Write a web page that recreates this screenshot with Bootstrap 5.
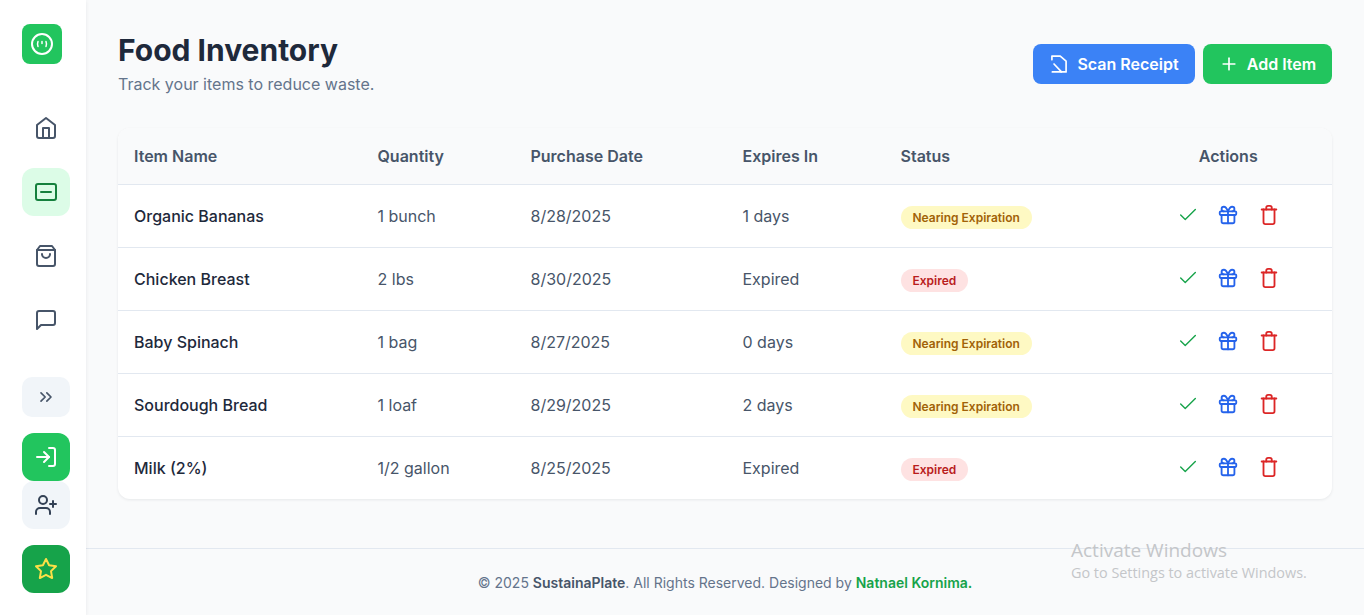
<!DOCTYPE html>
<html lang="en">
<head>
  <meta charset="UTF-8">
  <title>Food Inventory</title>
  <link href="https://cdn.jsdelivr.net/npm/bootstrap@5.3.0/dist/css/bootstrap.min.css" rel="stylesheet">
  <style>
    body { font-family: Inter, "Liberation Sans", sans-serif; background: #f9fafb; height: 100vh; overflow: hidden; color: #1f2937; }
    svg.ico { fill: none; stroke: currentColor; stroke-width: 2; stroke-linecap: round; stroke-linejoin: round; flex: none; }
    svg.ico .thin-line { stroke-width: 1.5; }
    .side-bar { width: 86px; background: #fff; box-shadow: 0 1px 4px rgba(15, 23, 42, .08); padding: 24px 16px 22px 22px; z-index: 2; }
    .logo-box { width: 40px; height: 40px; background: #22c55e; color: #fff; border-radius: 8px; margin-bottom: 40px; }
    .side-link { width: 48px; height: 48px; border-radius: 12px; color: #475569; }
    .side-link.is-active { background: #dcfce7; color: #15803d; }
    .side-toggle { width: 48px; height: 40px; border-radius: 10px; background: #f1f5f9; color: #475569; margin-top: 33px; margin-bottom: 16px; }
    .side-login { background: #22c55e; color: #fff; }
    .side-signup { background: #f1f5f9; color: #334155; }
    .side-star { background: #16a34a; color: #fde047; margin-top: 16px; }
    .page-head { padding: 32px 32px 0; height: 128px; }
    .page-title { font-size: 30px; font-weight: 700; line-height: 36px; color: #1e293b; margin: 0; }
    .page-sub { font-size: 16px; line-height: 24px; color: #64748b; margin: 4px 0 0; }
    .head-actions { margin-top: 12px; }
    .head-btn { height: 40px; border: 0; border-radius: 8px; color: #fff; font-size: 16px; font-weight: 600; padding: 0 16px; white-space: nowrap; }
    .btn-scan { background: #3b82f6; width: 162px; }
    .btn-add { background: #22c55e; width: 129px; }
    .table-box { margin: 0 32px; border-radius: 12px; background: #fff; box-shadow: 0 1px 3px rgba(15, 23, 42, .08); overflow: hidden; }
    .stock-table { margin: 0; table-layout: fixed; width: 100%; font-size: 16px; }
    .stock-table th { height: 56px; padding: 0 16px; background: #f9fafb; color: #475569; font-weight: 600; vertical-align: middle; border-bottom: 1px solid #e2e8f0; }
    .stock-table td { height: 63px; padding: 0 16px; color: #475569; vertical-align: middle; border-bottom: 1px solid #e2e8f0; }
    .stock-table tr:last-child td { border-bottom: 0; }
    .stock-table td.item-name { color: #1e293b; font-weight: 500; }
    .stock-table td.status-cell { padding-top: 2px; }
    .w-name { width: 243.5px; } .w-qty { width: 153px; } .w-date { width: 212px; } .w-exp { width: 158px; } .w-status { width: 240px; }
    .status-pill { display: inline-block; font-size: 12px; font-weight: 600; line-height: 16px; padding: 4px 12px 3px 12px; border-radius: 999px; }
    .pill-near { background: #fef9c3; color: #a16207; }
    .pill-gone { background: #fee2e2; color: #b91c1c; }
    .act-row { gap: 18.5px; margin-bottom: 2px; }
    .act-ok { color: #16a34a; } .act-gift { color: #2563eb; } .act-del { color: #dc2626; }
    .page-foot { border-top: 1px solid #e2e8f0; height: 67px; padding-top: 24px; font-size: 14px; line-height: 20px; color: #64748b; text-align: center; }
    .page-foot b { font-weight: 600; color: #475569; }
    .foot-link { font-weight: 600; color: #16a34a; text-decoration: none; }
    .win-mark { position: absolute; left: 1071px; top: 538px; color: #c4c6c9; font-family: "Open Sans", sans-serif; font-size: 14.4px; line-height: 20px; white-space: nowrap; }
    .win-mark div:first-child { font-size: 19px; line-height: 25px; }
  </style>
</head>
<body>
  <div class="d-flex h-100">
    <!-- Sidebar -->
    <aside class="side-bar d-flex flex-column flex-shrink-0">
      <div class="logo-box d-flex align-items-center justify-content-center">
        <svg class="ico" width="24" height="24" viewBox="0 0 24 24"><circle cx="12" cy="12" r="10"/><path class="thin-line" d="M8 9.5q-1 2.5 0 5M16 9.5q1 2.5 0 5M12 9.5v2"/></svg>
      </div>
      <nav class="d-flex flex-column gap-3">
        <a class="side-link d-flex align-items-center justify-content-center">
          <svg class="ico" width="24" height="24" viewBox="0 0 24 24"><path d="m3 9 9-7 9 7v11a2 2 0 0 1-2 2H5a2 2 0 0 1-2-2z"/><path d="M9 22V12h6v10"/></svg>
        </a>
        <a class="side-link is-active d-flex align-items-center justify-content-center">
          <svg class="ico" width="24" height="24" viewBox="0 0 24 24"><rect x="2" y="4" width="20" height="16" rx="2"/><path d="M7 12h10"/></svg>
        </a>
        <a class="side-link d-flex align-items-center justify-content-center">
          <svg class="ico" width="24" height="24" viewBox="0 0 24 24"><path d="M6 2 3 6v14a2 2 0 0 0 2 2h14a2 2 0 0 0 2-2V6l-3-4Z"/><path d="M3 6h18"/><path d="M16 10a4 4 0 0 1-8 0"/></svg>
        </a>
        <a class="side-link d-flex align-items-center justify-content-center">
          <svg class="ico" width="24" height="24" viewBox="0 0 24 24"><path d="M21 15a2 2 0 0 1-2 2H7l-4 4V5a2 2 0 0 1 2-2h14a2 2 0 0 1 2 2z"/></svg>
        </a>
      </nav>
      <div class="side-toggle d-flex align-items-center justify-content-center">
        <svg class="ico" width="20" height="20" viewBox="0 0 24 24"><path d="m6 17 5-5-5-5"/><path d="m13 17 5-5-5-5"/></svg>
      </div>
      <a class="side-link side-login d-flex align-items-center justify-content-center">
        <svg class="ico" width="24" height="24" viewBox="0 0 24 24"><path d="M15 3h4a2 2 0 0 1 2 2v14a2 2 0 0 1-2 2h-4"/><path d="m10 17 5-5-5-5"/><path d="M15 12H3"/></svg>
      </a>
      <a class="side-link side-signup d-flex align-items-center justify-content-center">
        <svg class="ico" width="24" height="24" viewBox="0 0 24 24"><path d="M16 21v-2a4 4 0 0 0-4-4H6a4 4 0 0 0-4 4v2"/><circle cx="9" cy="7" r="4"/><path d="M19 8v6"/><path d="M22 11h-6"/></svg>
      </a>
      <a class="side-link side-star d-flex align-items-center justify-content-center">
        <svg class="ico" width="24" height="24" viewBox="0 0 24 24"><path d="M12 2l3.09 6.26L22 9.27l-5 4.87 1.18 6.88L12 17.77l-6.18 3.25L7 14.14 2 9.27l6.91-1.01z"/></svg>
      </a>
    </aside>

    <!-- Main -->
    <main class="flex-grow-1 d-flex flex-column">
      <header class="page-head d-flex justify-content-between align-items-start">
        <div>
          <h1 class="page-title">Food Inventory</h1>
          <p class="page-sub">Track your items to reduce waste.</p>
        </div>
        <div class="d-flex gap-2 head-actions">
          <button class="head-btn btn-scan d-flex align-items-center justify-content-center gap-2">
            <svg class="ico" width="20" height="20" viewBox="0 0 24 24"><path d="M3.5 7V2.5h10l7 6v13h-6"/><path d="M6 12l9 9.5H4"/></svg>
            Scan Receipt
          </button>
          <button class="head-btn btn-add d-flex align-items-center justify-content-center gap-2">
            <svg class="ico" width="20" height="20" viewBox="0 0 24 24"><path d="M5 12h14"/><path d="M12 5v14"/></svg>
            Add Item
          </button>
        </div>
      </header>

      <div class="table-box">
        <table class="table stock-table" id="stockTable">
          <thead>
            <tr>
              <th class="w-name">Item Name</th>
              <th class="w-qty">Quantity</th>
              <th class="w-date">Purchase Date</th>
              <th class="w-exp">Expires In</th>
              <th class="w-status">Status</th>
              <th class="text-center">Actions</th>
            </tr>
          </thead>
          <tbody></tbody>
        </table>
      </div>

      <footer class="page-foot mt-auto">
        © 2025 <b>SustainaPlate</b>. All Rights Reserved. Designed by <a class="foot-link" href="#">Natnael Kornima.</a>
      </footer>
    </main>
  </div>

  <div class="win-mark">
    <div>Activate Windows</div>
    <div>Go to Settings to activate Windows.</div>
  </div>

  <script src="https://cdn.jsdelivr.net/npm/bootstrap@5.3.0/dist/js/bootstrap.bundle.min.js"></script>
  <script>
    const items = [
      ["Organic Bananas", "1 bunch", "8/28/2025", "1 days", "near"],
      ["Chicken Breast", "2 lbs", "8/30/2025", "Expired", "gone"],
      ["Baby Spinach", "1 bag", "8/27/2025", "0 days", "near"],
      ["Sourdough Bread", "1 loaf", "8/29/2025", "2 days", "near"],
      ["Milk (2%)", "1/2 gallon", "8/25/2025", "Expired", "gone"]
    ];
    const actions = `
      <div class="d-flex justify-content-center act-row">
        <svg class="ico act-ok" width="22" height="22" viewBox="0 0 24 24"><path class="thin-line" d="M20 6 9 17l-5-5"/></svg>
        <svg class="ico act-gift" width="22" height="22" viewBox="0 0 24 24"><rect x="3" y="8" width="18" height="4" rx="1"/><path d="M12 8v13"/><path d="M19 12v7a2 2 0 0 1-2 2H7a2 2 0 0 1-2-2v-7"/><path d="M7.5 8a2.5 2.5 0 0 1 0-5C10 3 12 8 12 8s2-5 4.5-5a2.5 2.5 0 0 1 0 5"/></svg>
        <svg class="ico act-del" width="22" height="22" viewBox="0 0 24 24"><path d="M4 6h16"/><path d="M18 6v14c0 1-1 2-2 2H8c-1 0-2-1-2-2V6"/><path d="M9 6V4c0-1 1-2 2-2h2c1 0 2 1 2 2v2"/></svg>
      </div>`;
    document.querySelector("#stockTable tbody").innerHTML = items.map(i => `
      <tr>
        <td class="item-name">${i[0]}</td>
        <td>${i[1]}</td>
        <td>${i[2]}</td>
        <td>${i[3]}</td>
        <td class="status-cell"><span class="status-pill pill-${i[4]}">${i[4] === "near" ? "Nearing Expiration" : "Expired"}</span></td>
        <td>${actions}</td>
      </tr>`).join("");
  </script>
</body>
</html>
